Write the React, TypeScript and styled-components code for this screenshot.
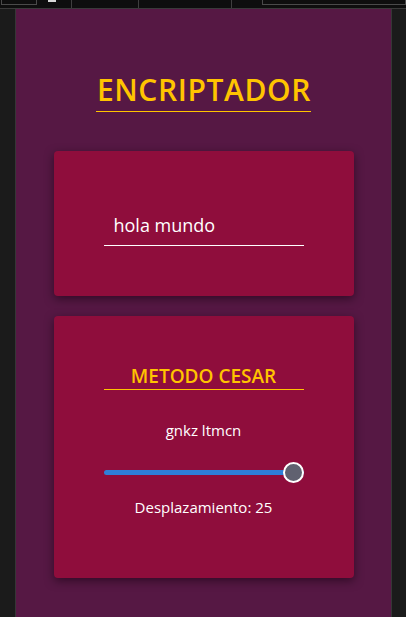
import React, { useState } from 'react';
import styled, { createGlobalStyle } from 'styled-components';

const GlobalStyle = createGlobalStyle`
  html, body {
    margin: 0;
    padding: 0;
    background: #1b1b1b;
    height: 100%;
  }
  #root {
    min-height: 100%;
  }
  * {
    box-sizing: border-box;
  }
`;

// Top strip of the host tool window
const TopBar = styled.div`
  height: 9px;
  background: #0e0e0e;
  border-bottom: 1px solid #3a3a3a;
  display: flex;
  align-items: flex-start;
`;

const BarSegment = styled.div<{ $w: number; $divider?: boolean }>`
  width: ${p => p.$w}px;
  height: 8px;
  flex-shrink: 0;
  border-right: ${p => (p.$divider ? '1px solid #3f3f3f' : 'none')};
`;

const BarBox = styled.div<{ $w: number }>`
  width: ${p => p.$w}px;
  height: 5px;
  border: 1px solid #4a4a4a;
  border-top: none;
  margin-left: 1px;
`;

const BarMark = styled.div`
  width: 8px;
  height: 2px;
  background: #d8d8d8;
  margin-left: 2px;
`;

const Frame = styled.div`
  display: flex;
  min-height: 608px;
`;

const Phone = styled.div`
  margin-left: 15px;
  width: 377px;
  border-left: 1px solid #363636;
  border-right: 1px solid #363636;
  background: #561844;
  display: flex;
  flex-direction: column;
  align-items: center;
  padding-top: 63px;
  padding-bottom: 40px;
  font-family: 'Open Sans', 'Liberation Sans', sans-serif;
`;

const Title = styled.h1`
  margin: 0;
  font-size: 30px;
  line-height: 36px;
  font-weight: 600;
  color: #ffc400;
  letter-spacing: 0.6px;
  border-bottom: 1px solid #ffc400;
  padding: 0 0 3px 1px;
`;

const Stack = styled.div`
  display: flex;
  flex-direction: column;
  gap: 20px;
  margin-top: 39px;
`;

const Card = styled.section<{ $top: number; $bottom: number }>`
  width: 300px;
  background: #8f0d3c;
  border-radius: 4px;
  box-shadow: 0 3px 10px rgba(20, 0, 15, 0.55);
  display: flex;
  flex-direction: column;
  align-items: center;
  padding: ${p => p.$top}px 50px ${p => p.$bottom}px;
`;

const TextInput = styled.input`
  width: 200px;
  height: 39px;
  border: none;
  border-bottom: 1px solid #ffffff;
  background: transparent;
  color: #ffffff;
  font-family: inherit;
  font-size: 18px;
  padding: 0 0 2px 10px;
  outline: none;
`;

const SectionTitle = styled.h2`
  margin: 0;
  width: 200px;
  text-align: center;
  font-size: 19px;
  line-height: 24px;
  font-weight: 600;
  color: #ffc400;
  border-bottom: 1px solid #ffc400;
  padding-bottom: 1px;
`;

const Output = styled.p`
  margin: 30px 0 0;
  font-size: 15px;
  line-height: 20px;
  color: #ffffff;
`;

const Slider = styled.input`
  -webkit-appearance: none;
  appearance: none;
  width: 200px;
  height: 22px;
  margin: 21px 0 0;
  background: transparent;

  &::-webkit-slider-runnable-track {
    height: 5px;
    border-radius: 3px;
    background: #2f7ed8;
  }

  &::-webkit-slider-thumb {
    -webkit-appearance: none;
    width: 21px;
    height: 21px;
    margin-top: -8px;
    border-radius: 50%;
    background: #606170;
    border: 2px solid #ffffff;
  }
`;

const Shift = styled.p`
  margin: 14px 0 0;
  font-size: 15px;
  line-height: 20px;
  color: #ffffff;
`;

const caesar = (text: string, shift: number) =>
  text.replace(/[a-z]/g, c => String.fromCharCode(((c.charCodeAt(0) - 97 + shift) % 26) + 97));

const App: React.FC = () => {
  const [text, setText] = useState('hola mundo');
  const [shift, setShift] = useState(25);

  return (
    <>
      <GlobalStyle />
      <TopBar>
        <BarSegment $w={46}>
          <BarBox $w={36} />
        </BarSegment>
        <BarSegment $w={26} $divider>
          <BarMark />
        </BarSegment>
        <BarSegment $w={67} $divider />
        <BarSegment $w={93} $divider />
        <BarSegment $w={29} />
        <BarBox $w={145} />
      </TopBar>
      <Frame>
        <Phone>
          <Title>ENCRIPTADOR</Title>
          <Stack>
            <Card $top={56} $bottom={50}>
              <TextInput value={text} onChange={e => setText(e.target.value)} />
            </Card>
            <Card $top={48} $bottom={61}>
              <SectionTitle>METODO CESAR</SectionTitle>
              <Output>{caesar(text, shift)}</Output>
              <Slider
                type="range"
                min={0}
                max={25}
                value={shift}
                onChange={e => setShift(Number(e.target.value))}
              />
              <Shift>Desplazamiento: {shift}</Shift>
            </Card>
          </Stack>
        </Phone>
      </Frame>
    </>
  );
};

export default App;
